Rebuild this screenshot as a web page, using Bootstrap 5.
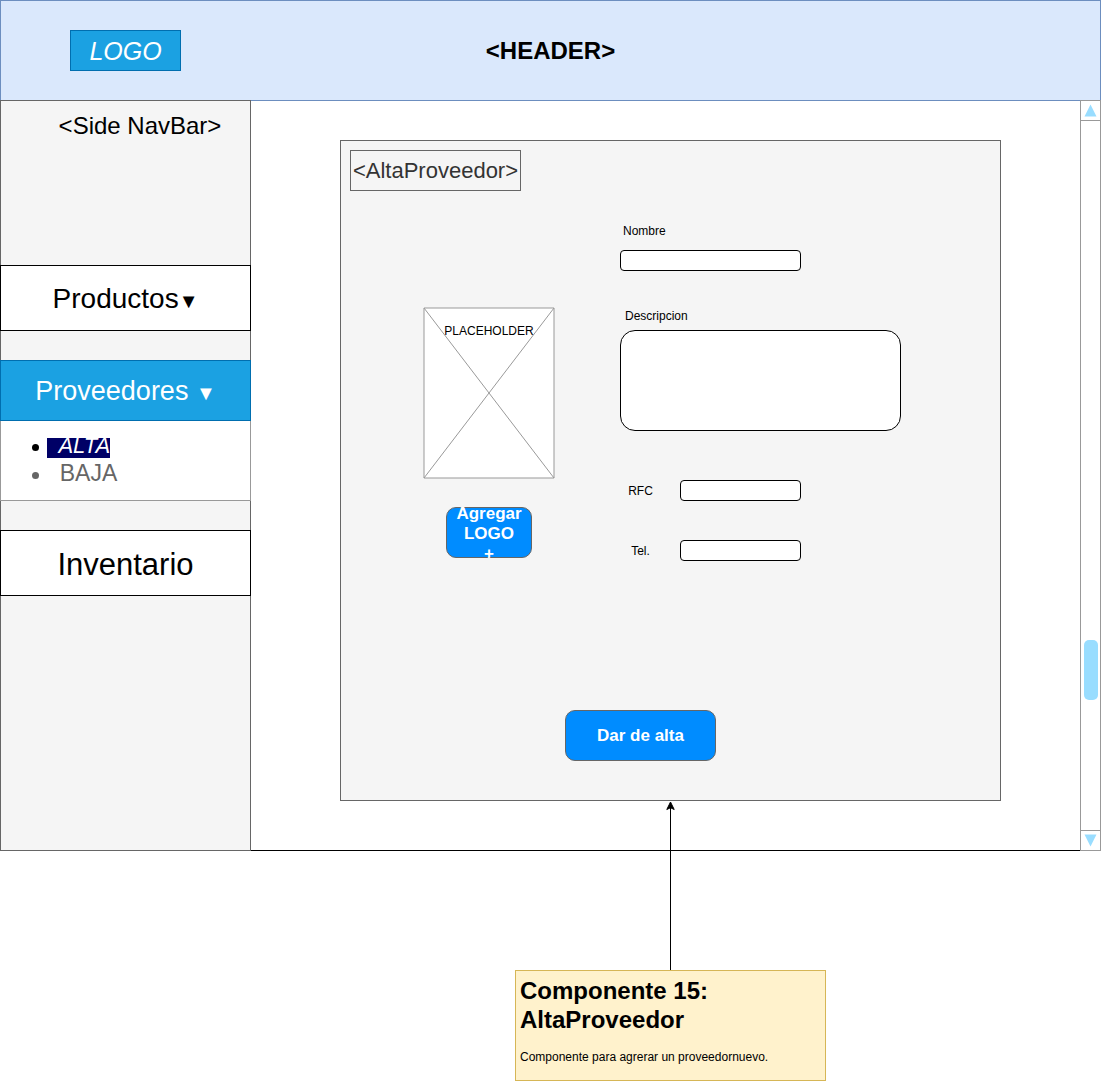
<!DOCTYPE html>
<html lang="es">
<head>
<meta charset="utf-8">
<meta name="viewport" content="width=device-width, initial-scale=1">
<title>Alta de proveedor</title>
<link rel="stylesheet" href="https://cdn.jsdelivr.net/npm/bootstrap@5.3.0/dist/css/bootstrap.min.css">
<style>
body{font-family:"Liberation Sans",Arial,sans-serif;font-size:12px;line-height:18px;color:#000;background:#fff}
.top-bar{min-height:101px;background:#dae8fc;border:1px solid #6c8ebf;display:grid;grid-template-columns:1fr auto 1fr;align-items:center}
.top-bar h1{font-size:24px;line-height:29px}
.brand{width:111px;height:41px;margin-left:69px;background:#1ba1e2;border:1px solid #006eaf;color:#fff;font-size:25px;font-style:italic}
.shell{margin-top:-1px;min-height:751px}
.side{width:251px;background:#f5f5f5;border:1px solid #666}
.side h2{font-size:24px;line-height:29px;margin:10px 0 125px;padding-left:29px}
.side-item{width:251px;height:66px;margin:0 -1px;padding:3px 0 0;border:1px solid #000;background:#fff;color:#000;font-size:28px;line-height:34px}
.side-item.picked{height:61px;margin-top:29px;border-color:#006eaf;background:#1ba1e2;color:#fff;font-size:27px}
.side-item.big{font-size:31px}
.tri{font-size:20px}
.sub-box{height:80px;margin:0 -1px 29px;padding-top:17px;border:1px solid #999;border-top:0;background:#fff}
.sub-clip{overflow:hidden}
.sub-box ul{margin:-7px 0 0;padding-left:46px;font-size:23px;line-height:28px;list-style:none}
.sub-box li::before{content:"";display:inline-block;width:7px;height:7px;margin:0 8px 0 -15px;border-radius:50%;background:currentColor;vertical-align:2px}
.sub-box a{color:inherit;text-decoration:none;white-space:pre}
.sub-box a.here{background:#006;color:#fff;font-size:22px;font-style:italic}
.sub-box .off{color:#666;line-height:27px}
.stage{border-bottom:1px solid #000;padding:40px 79px 49px 89px}
.panel{min-height:661px;background:#f5f5f5;border:1px solid #666;padding:9px}
.panel h2{width:171px;height:41px;border:1px solid #666;color:#333;font-size:22px;line-height:26px}
.fields{margin-top:31px;padding-left:73px;gap:65px}
.pic-col{width:132px;padding-top:85px}
.pic-col figcaption{padding-top:15px}
.act{background:#008cff;border:1px solid #666;border-radius:10px;color:#fff;font-weight:700;font-size:17px;line-height:20px;padding:0;height:51px}
.add{width:86px;margin-top:28px;padding-top:2px}
.send{width:151px;margin:149px 0 0 215px}
.in-col{width:281px}
.in-col label{display:block;padding-left:3px}
.in-col input,.in-col textarea{display:block;background:#fff;border:1px solid #000;border-radius:4px;height:21px;width:121px;padding:0 4px}
.in-col input.wide{width:181px;margin:10px 0 36px}
.in-col textarea{width:100%;height:101px;border-radius:15px;padding:8px;margin:5px 0 49px;resize:none}
.in-col .pair{gap:19px}
.pair + .pair{margin-top:39px}
.in-col .pair label{width:41px;padding:0;text-align:center}
.in-col label.inset-label{padding-left:5px}
.scroller{width:21px;border:1px solid #999}
.scroller button{height:20px;border:0;padding:0;background:#fff}
.scroller .up{border-bottom:1px solid #999}
.scroller .down{border-top:1px solid #999}
.track{padding-top:519px}
.thumb{width:14px;height:60px;border-radius:5px;background:#9df}
.callout-area{margin:-50px 100px 0 340px}
.note{width:311px;min-height:111px;background:#fff2cc;border:1px solid #d6b656;padding:5px 4px}
.note h3{font-size:24px;line-height:29px;margin:0 0 14px}
</style>
</head>
<body>
<header class="top-bar">
  <div class="brand d-flex align-items-center justify-content-center">LOGO</div>
  <h1 class="m-0 fw-bold">&lt;HEADER&gt;</h1>
</header>
<div class="shell d-flex">
  <nav class="side flex-shrink-0" aria-label="Side NavBar">
    <h2 class="text-center fw-normal">&lt;Side NavBar&gt;</h2>
    <button type="button" class="side-item d-flex align-items-center justify-content-center"><span>Productos<span class="tri">▼</span></span></button>
    <button type="button" class="side-item picked d-flex align-items-center justify-content-center"><span>Proveedores <span class="tri">▼</span></span></button>
    <div class="sub-box">
      <div class="sub-clip">
        <ul>
          <li><a href="#alta" class="here">  ALTA</a></li>
          <li class="off"><a href="#baja">  BAJA</a></li>
        </ul>
      </div>
    </div>
    <button type="button" class="side-item big d-flex align-items-center justify-content-center">Inventario</button>
  </nav>
  <main class="stage flex-fill">
    <form class="panel">
      <h2 class="d-flex align-items-center justify-content-center m-0 fw-normal">&lt;AltaProveedor&gt;</h2>
      <div class="fields d-flex">
        <div class="pic-col d-flex flex-column align-items-center">
          <figure class="position-relative m-0">
            <svg class="d-block" width="132" height="172" viewBox="0 0 132 172" aria-hidden="true"><path d="M1 1H131V171H1Z" fill="#fff" stroke="#999"/><path d="M1 1L131 171M131 1L1 171" stroke="#999"/></svg>
            <figcaption class="position-absolute top-0 start-0 w-100 text-center">PLACEHOLDER</figcaption>
          </figure>
          <button type="button" class="act add d-flex flex-column align-items-center justify-content-center"><span>Agregar</span><span>LOGO</span><span>+</span></button>
        </div>
        <div class="in-col">
          <label for="nombre">Nombre</label>
          <input id="nombre" class="wide" type="text">
          <label for="descripcion" class="inset-label">Descripcion</label>
          <textarea id="descripcion"></textarea>
          <div class="pair d-flex align-items-center"><label for="rfc">RFC</label><input id="rfc" type="text"></div>
          <div class="pair d-flex align-items-center"><label for="tel">Tel.</label><input id="tel" type="tel"></div>
        </div>
      </div>
      <button type="submit" class="act send">Dar de alta</button>
    </form>
  </main>
  <div class="scroller d-flex flex-column flex-shrink-0">
    <button type="button" class="up" aria-label="Subir"><svg class="d-block mx-auto" width="13" height="13" viewBox="0 0 13 13"><path d="M6.5 0.500L12.500 12.500H0.500Z" fill="#9df"/></svg></button>
    <div class="track flex-fill"><div class="thumb mx-auto"></div></div>
    <button type="button" class="down" aria-label="Bajar"><svg class="d-block mx-auto" width="13" height="13" viewBox="0 0 13 13"><path d="M0.500 0.500H12.500L6.500 12.500Z" fill="#9df"/></svg></button>
  </div>
</div>
<section class="callout-area position-relative d-flex flex-column align-items-center">
  <svg class="d-block" width="11" height="169" viewBox="0 0 11 169" aria-hidden="true"><path d="M5.500 6V169" stroke="#000"/><path d="M5.500 1L9.200 8.500L5.500 6.700L1.800 8.500Z" stroke="#000"/></svg>
  <div class="note">
    <h3 class="fw-bold">Componente 15: AltaProveedor</h3>
    <p class="m-0">Componente para agrerar un proveedornuevo.</p>
  </div>
</section>
<script src="https://cdn.jsdelivr.net/npm/bootstrap@5.3.0/dist/js/bootstrap.bundle.min.js"></script>
</body>
</html>
